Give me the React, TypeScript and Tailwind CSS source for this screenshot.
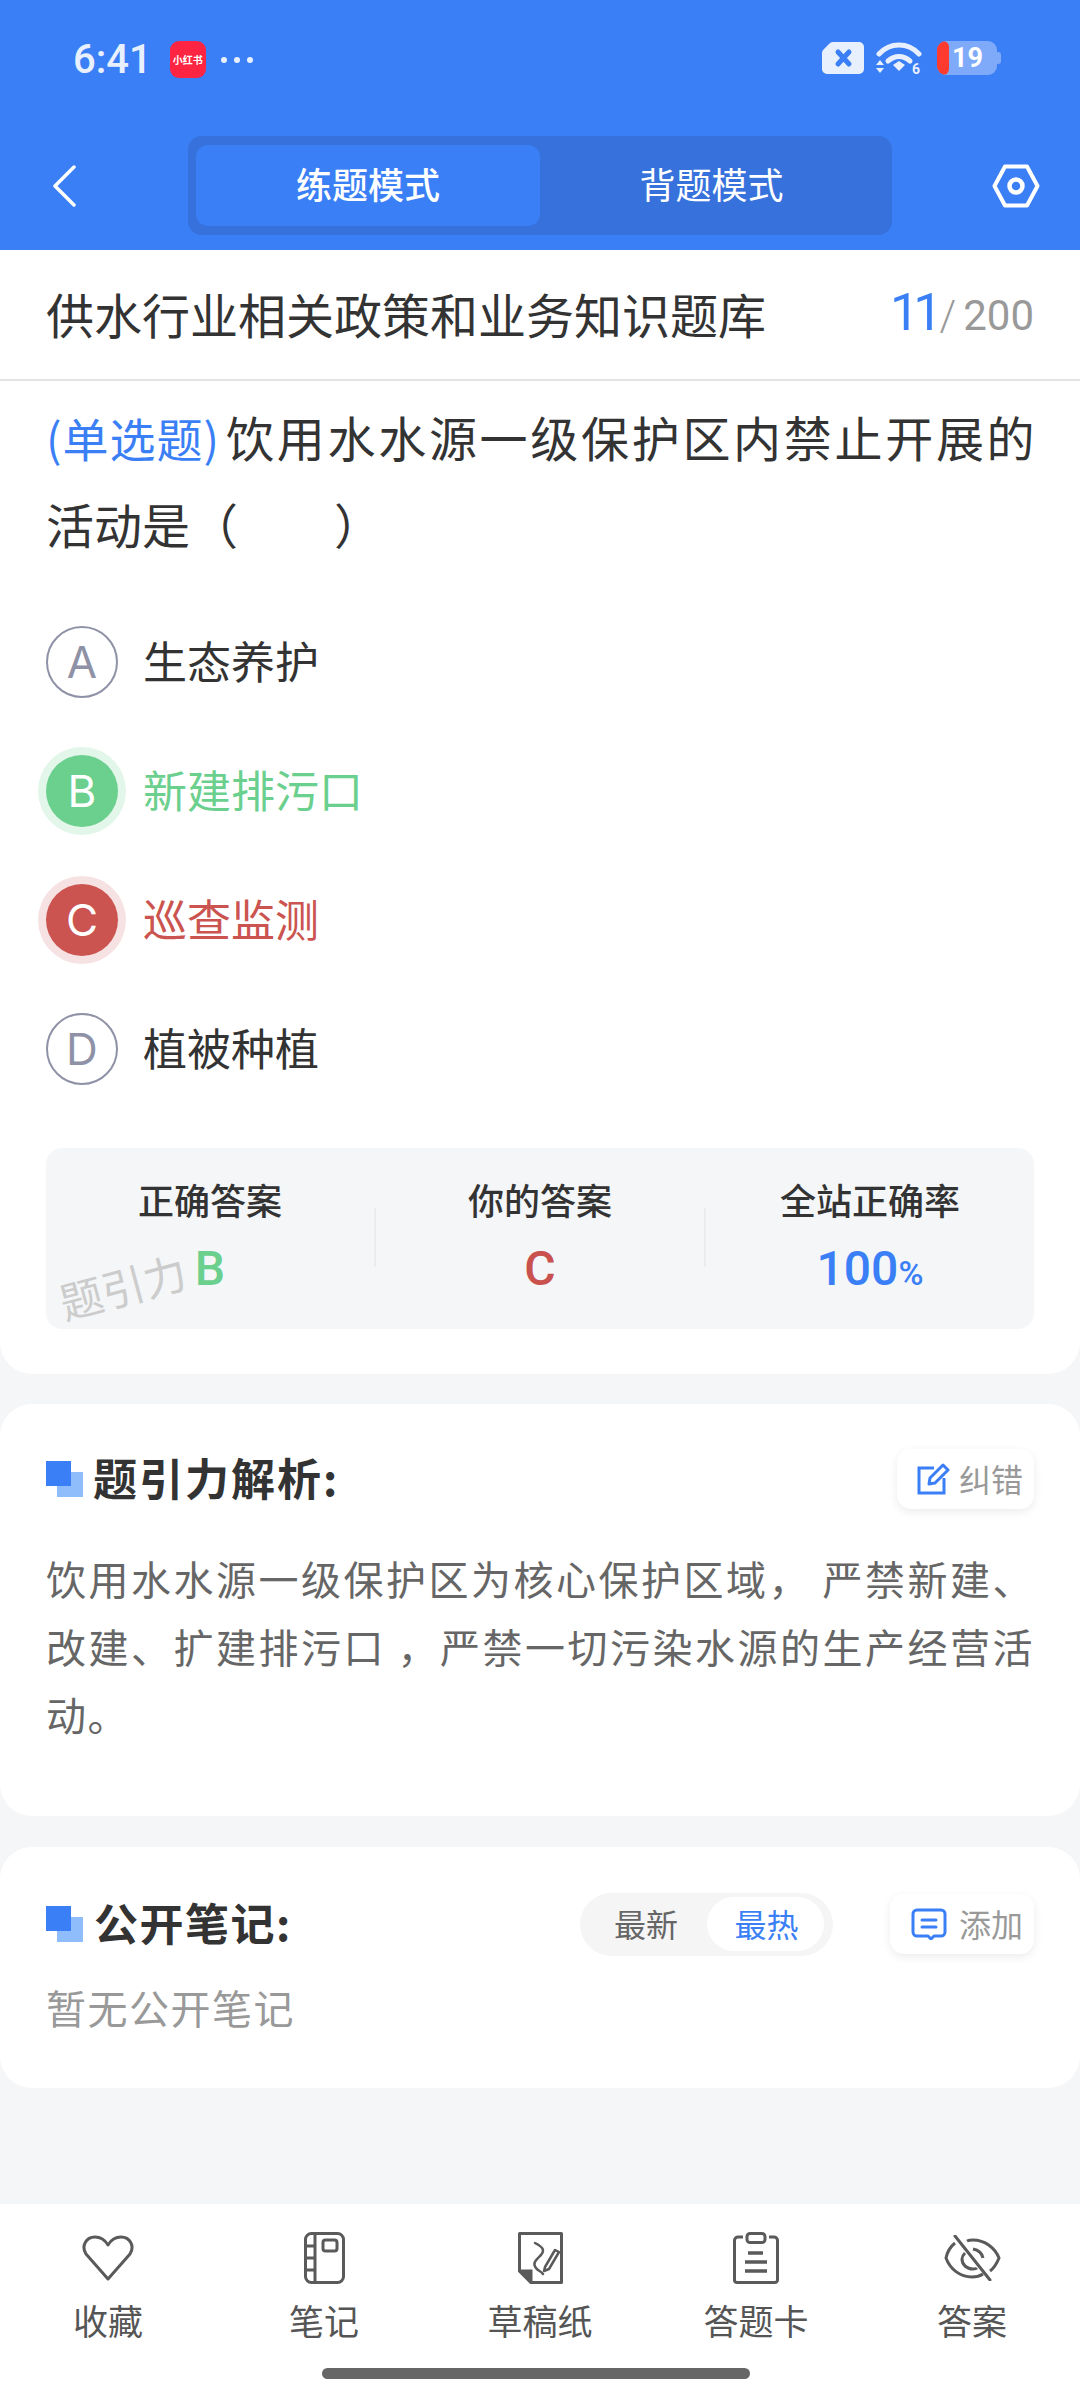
const options = [
  { key: "A", text: "生态养护", state: "normal" },
  { key: "B", text: "新建排污口", state: "right" },
  { key: "C", text: "巡查监测", state: "wrong" },
  { key: "D", text: "植被种植", state: "normal" },
];

function OptionRow({ label, text, state }: { label: string; text: string; state: string }) {
  let circle = "border-2 border-[#8f92a6] text-[#8f92a6]";
  let color = "text-[#333333]";
  if (state === "right") {
    circle = "bg-[#6bcf8e] text-white shadow-[0_0_0_8px_#e2f6e9]";
    color = "text-[#6bcf8e]";
  }
  if (state === "wrong") {
    circle = "bg-[#cb5450] text-white shadow-[0_0_0_8px_#f6e2e2]";
    color = "text-[#cb5450]";
  }
  return (
    <div className="flex h-[129px] items-center">
      <div className={`flex h-[72px] w-[72px] items-center justify-center rounded-full font-['Inter',sans-serif] text-[44px] font-normal ${circle}`}>
        {label}
      </div>
      <span className={`ml-[25px] pb-[3px] text-[44px] ${color}`}>{text}</span>
    </div>
  );
}

function Stat({ title, children }: { title: string; children: React.ReactNode }) {
  return (
    <div className="flex flex-1 flex-col items-center">
      <span className="text-[36px] leading-[50px] font-medium text-[#333333]">{title}</span>
      <div className="mt-[20px] font-['Roboto',sans-serif] text-[48px] leading-[50px] font-medium">{children}</div>
    </div>
  );
}

function SectionMark() {
  return (
    <div className="relative h-[36px] w-[37px] shrink-0">
      <div className="absolute top-[11px] left-[11px] h-[25px] w-[26px] bg-[#8fbcfb]" />
      <div className="absolute top-0 left-0 h-[25px] w-[25px] bg-[#3b7ff6]" />
    </div>
  );
}

function EditIcon() {
  return (
    <svg width="33" height="32" viewBox="0 0 33 32" fill="none" stroke="#3b7ff6" strokeWidth="3">
      <path d="M17 5H2v25h25V15" />
      <path d="M12 21l1-6L26 2l5 5-13 13z" strokeLinejoin="round" />
    </svg>
  );
}

function CommentIcon() {
  return (
    <svg width="36" height="32" viewBox="0 0 36 32" fill="none" stroke="#3b7ff6" strokeWidth="3">
      <path d="M6 2h24a4 4 0 0 1 4 4v18a4 4 0 0 1-4 4h-7l-3 3-3-3H6a4 4 0 0 1-4-4V6a4 4 0 0 1 4-4z" strokeLinejoin="round" />
      <path d="M11 12h14M11 19h14" strokeLinecap="round" />
    </svg>
  );
}

function HeartIcon() {
  return (
    <svg width="52" height="46" viewBox="0 0 52 46" fill="none" stroke="#5a5a5a" strokeWidth="3">
      <path d="M26 44L4 19C-1 11 4 2 13 2c6 0 10 3 13 8 3-5 7-8 13-8 9 0 14 9 9 17z" strokeLinejoin="round" />
    </svg>
  );
}

function NotebookIcon() {
  return (
    <svg width="41" height="52" viewBox="0 0 41 52" fill="none" stroke="#5a5a5a" strokeWidth="3">
      <rect x="1.5" y="1.5" width="38" height="49" rx="6" />
      <path d="M11 2v48M2 14h9M2 26h9M2 38h9" />
      <rect x="19" y="8" width="14" height="11" rx="2.5" />
    </svg>
  );
}

function DraftIcon() {
  return (
    <svg width="45" height="52" viewBox="0 0 45 52" fill="none" stroke="#5a5a5a" strokeWidth="3">
      <path d="M13 50.5H43.5V1.5H1.5V39z" strokeLinejoin="round" />
      <path d="M1.5 39H13v11.5z" fill="#5a5a5a" />
      <path d="M17 11c8 4 10 7 6 12-5 5-9 8-5 13 2 3 5 3 7 6" strokeLinecap="round" strokeWidth="2.5" />
      <path d="M27 35l10-17 4 2-10 17-5 2z" strokeWidth="2.5" strokeLinejoin="round" />
    </svg>
  );
}

function SheetIcon() {
  return (
    <svg width="46" height="52" viewBox="0 0 46 52" fill="none" stroke="#5a5a5a" strokeWidth="3">
      <path d="M10 5H5a3.5 3.5 0 0 0-3.5 3.5v40A2.5 2.5 0 0 0 4 50.5h38a2.5 2.5 0 0 0 2.500-2.5V8.500A3.500 3.500 0 0 0 41 5h-5" />
      <rect x="14" y="1.500" width="18" height="9" rx="3" />
      <path d="M15 21h15M12 30h22M12 39h22" strokeWidth="3.500" />
    </svg>
  );
}

function EyeOffIcon() {
  return (
    <svg width="57" height="46" viewBox="0 0 57 46" fill="none" stroke="#5a5a5a" strokeWidth="3">
      <path d="M11 8C6 12 3 18 2 23c4 11 14 19 26 19 4 0 8-1 11-3" />
      <path d="M23 6c2-1 4-1 6-1 12 0 22 8 26 18-2 5-5 10-9 13" />
      <path d="M21 18c-2 2-3 4-3 6 0 6 5 10 11 10 1 0 3 0 4-1" />
      <path d="M29 14c5 1 9 4 10 9" />
      <path d="M11 1l35 44" strokeLinecap="round" />
    </svg>
  );
}

function NavItem({ icon, label }: { icon: React.ReactNode; label: string }) {
  return (
    <div className="flex flex-1 flex-col items-center">
      <div className="flex h-[54px] items-center">{icon}</div>
      <span className="mt-[10px] text-[35px] leading-[50px] text-[#555555]">{label}</span>
    </div>
  );
}

export default function App() {
  return (
    <div className="flex h-[2400px] w-[1080px] flex-col bg-[#f5f6f8] font-['Noto_Sans_CJK_SC','Noto_Sans',sans-serif]">
      {/* blue header */}
      <div className="h-[250px] shrink-0 bg-[#3b7ff6]">
        <div className="flex h-[136px] items-start justify-between pt-[41px] pr-[79px] pl-[73px]">
          <div className="flex items-center">
            <span className="font-['Roboto',sans-serif] text-[40px] leading-[36px] font-medium text-[#e8f0fe]">6:41</span>
            <div className="ml-[18px] flex h-[37px] w-[36px] items-center justify-center rounded-[9px] bg-[#ff2442] text-[10px] font-bold whitespace-nowrap text-white">
              小红书
            </div>
            <div className="ml-[15px] flex gap-[7px]">
              <div className="h-[6px] w-[6px] rounded-full bg-[#e8f0fe]" />
              <div className="h-[6px] w-[6px] rounded-full bg-[#e8f0fe]" />
              <div className="h-[6px] w-[6px] rounded-full bg-[#e8f0fe]" />
            </div>
          </div>
          <div className="flex items-center">
            <svg width="43" height="34" viewBox="0 0 43 34">
              <path d="M12 1h26a5 5 0 0 1 5 5v22a5 5 0 0 1-5 5H6a5 5 0 0 1-5-5V12a5 5 0 0 1 2-4l5-5a5 5 0 0 1 4-2z" fill="#e8f0fe" />
              <path d="M17 11l11 12M28 11L17 23" stroke="#3b7ff6" strokeWidth="5" strokeLinecap="round" />
            </svg>
            <svg className="ml-[12px]" width="46" height="34" viewBox="0 0 46 34" fill="none" stroke="#e8f0fe">
              <path d="M3 13C14 1 32 1 43 13" strokeWidth="5" strokeLinecap="round" />
              <path d="M12 20c7-6 15-6 22 0" strokeWidth="5" strokeLinecap="round" />
              <path d="M17 24l6-4 6 4-6 6z" fill="#e8f0fe" stroke="none" />
              <path d="M4 19l4 5H0zM4 32l4-5H0z" fill="#e8f0fe" stroke="none" />
              <text x="36" y="33" fill="#e8f0fe" stroke="none" fontSize="14" fontWeight="700" fontFamily="Roboto">6</text>
            </svg>
            <div className="ml-[15px] flex h-[34px] w-[60px] items-center overflow-hidden rounded-[9px] bg-[#7faafa]">
              <div className="h-full w-[12px] rounded-[6px] bg-[#ff3b30]" />
              <span className="ml-[3px] font-['Roboto',sans-serif] text-[27px] leading-[34px] font-bold text-white">19</span>
            </div>
            <div className="h-[12px] w-[4px] rounded-r-[3px] bg-[#7faafa]" />
          </div>
        </div>
        <div className="flex h-[99px] items-center pl-[52px]">
          <svg width="24" height="42" viewBox="0 0 24 42" fill="none" stroke="white" strokeWidth="3.500">
            <path d="M22 2L3 21l19 19" strokeLinecap="round" strokeLinejoin="round" />
          </svg>
          <div className="ml-[112px] flex h-[99px] w-[704px] items-center gap-[8px] rounded-[14px] bg-[#3671dc] px-[8px]">
            <div className="flex h-[81px] w-[344px] items-center justify-center rounded-[12px] bg-[#3b7ff6] pb-[5px] text-[36px] font-medium text-white">
              练题模式
            </div>
            <div className="flex h-[81px] flex-1 items-center justify-center pr-[9px] pb-[5px] text-[36px] text-white">背题模式</div>
          </div>
          <svg className="ml-[100px]" width="48" height="44" viewBox="0 0 48 44" fill="none" stroke="white" strokeWidth="4">
            <path d="M13 2.500h22L45.500 22 35 41.500H13L2.500 22z" strokeLinejoin="round" />
            <circle cx="24" cy="22" r="6.500" strokeWidth="4.500" />
          </svg>
        </div>
      </div>

      {/* question card */}
      <div className="rounded-b-[32px] bg-white">
        <div className="flex h-[131px] items-center justify-between border-b-2 border-[#e4e4e4] px-[46px] pb-[4px]">
          <h1 className="text-[48px] font-normal text-[#333333]">供水行业相关政策和业务知识题库</h1>
          <div className="flex items-baseline font-['Roboto',sans-serif] text-[#999999]">
            <span className="text-[52px] tracking-[-6px] text-[#3b7ff6]">11</span>
            <span className="ml-[3px] text-[42px] font-light">/</span>
            <span className="ml-[7px] text-[42px]">200</span>
          </div>
        </div>
        <div className="px-[46px] pt-[12px] pb-[45px]">
          <p className="text-[48px] leading-[86px] whitespace-nowrap text-[#333333]">
            <span className="text-[46px] tracking-[1px] text-[#3b7ff6]">(单选题)</span>
            <span className="ml-[6px] tracking-[2.7px]">饮用水水源一级保护区内禁止开展的</span>
            <br />
            活动是（　　）
          </p>
          <div className="mt-[31px]">
            {options.map((o) => (
              <OptionRow key={o.key} label={o.key} text={o.text} state={o.state} />
            ))}
          </div>
          <div className="relative mt-[35px] flex h-[181px] items-start overflow-hidden rounded-[16px] bg-[#f4f6f8] pt-[26px]">
            <Stat title="正确答案">
              <span className="text-[#6bcf8e]">B</span>
            </Stat>
            <div className="mt-[34px] h-[59px] w-[2px] bg-[#ebecee]" />
            <Stat title="你的答案">
              <span className="text-[#c9524e]">C</span>
            </Stat>
            <div className="mt-[34px] h-[59px] w-[2px] bg-[#ebecee]" />
            <Stat title="全站正确率">
              <span className="text-[#3b7ff6]">
                100<span className="text-[34px]">%</span>
              </span>
            </Stat>
            <span className="absolute top-[116px] left-[12px] -rotate-[15deg] text-[43px] leading-none whitespace-nowrap text-[#cccccc]">
              题引力
            </span>
          </div>
        </div>
      </div>

      {/* analysis */}
      <div className="mt-[30px] rounded-[32px] bg-white px-[46px] pt-[45px] pb-[68px]">
        <div className="flex h-[60px] items-center justify-between">
          <div className="flex items-center">
            <SectionMark />
            <span className="ml-[10px] pb-[5px] text-[44px] font-bold tracking-[2px] text-[#333333]">题引力解析:</span>
          </div>
          <div className="flex h-[60px] w-[137px] items-center gap-[9px] rounded-[14px] bg-white pl-[20px] shadow-[0_3px_10px_rgba(0,0,0,0.08)]">
            <EditIcon />
            <span className="pb-[2px] text-[32px] text-[#999999]">纠错</span>
          </div>
        </div>
        <p className="mt-[35px] text-justify text-[40px] leading-[68px] tracking-[1.5px] text-[#666666]">
          饮用水水源一级保护区为核心保护区域， 严禁新建、改建、扩建排污口 ，严禁一切污染水源的生产经营活动。
        </p>
      </div>

      {/* notes */}
      <div className="mt-[31px] rounded-[32px] bg-white px-[46px] pt-[46px] pb-[51px]">
        <div className="flex h-[62px] items-center">
          <SectionMark />
          <span className="ml-[11px] pb-[5px] text-[44px] font-bold tracking-[1.5px] text-[#333333]">公开笔记:</span>
          <div className="ml-auto flex h-[63px] w-[253px] items-center rounded-full bg-[#f5f5f5] pr-[9px]">
            <span className="ml-[34px] pb-[2px] text-[32px] text-[#666666]">最新</span>
            <div className="ml-[29px] flex h-[54px] w-[117px] items-center justify-center rounded-full bg-white pb-[2px] pl-[2px] text-[32px] text-[#3b7ff6]">
              最热
            </div>
          </div>
          <div className="ml-[57px] flex h-[60px] w-[144px] items-center gap-[12px] rounded-[14px] bg-white pl-[21px] shadow-[0_3px_10px_rgba(0,0,0,0.08)]">
            <CommentIcon />
            <span className="pb-[3px] text-[32px] text-[#999999]">添加</span>
          </div>
        </div>
        <p className="mt-[22px] text-[40px] leading-[60px] tracking-[1.5px] text-[#999999]">暂无公开笔记</p>
      </div>

      <div className="flex-1" />

      {/* bottom bar */}
      <div className="relative h-[196px] shrink-0 bg-white">
        <div className="flex pt-[27px]">
          <NavItem icon={<HeartIcon />} label="收藏" />
          <NavItem icon={<NotebookIcon />} label="笔记" />
          <NavItem icon={<DraftIcon />} label="草稿纸" />
          <NavItem icon={<SheetIcon />} label="答题卡" />
          <NavItem icon={<EyeOffIcon />} label="答案" />
        </div>
        <div className="absolute bottom-[21px] left-[322px] h-[11px] w-[428px] rounded-full bg-[#666666]" />
      </div>
    </div>
  );
}
